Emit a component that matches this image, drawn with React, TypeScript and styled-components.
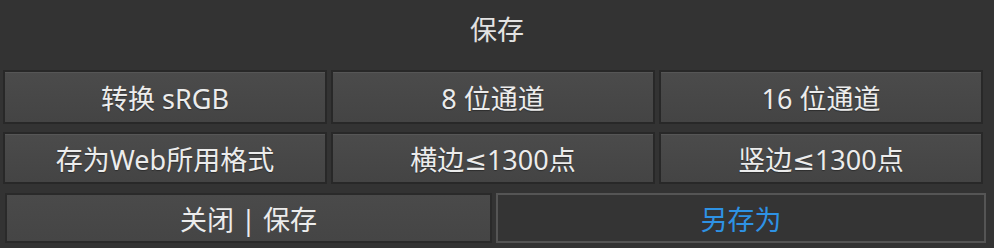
import React from "react";
import styled, { createGlobalStyle } from "styled-components";

const Global = createGlobalStyle`
  html, body { margin: 0; padding: 0; background: #333333; }
  body { font-family: "Noto Sans", "DejaVu Sans", "Noto Sans CJK SC", sans-serif; }
`;

const Panel = styled.div`
  width: 994px;
  height: 248px;
  background: #333333;
  display: flex;
  flex-direction: column;
  box-sizing: border-box;
  overflow: hidden;
`;

const Title = styled.div`
  height: 56px;
  display: flex;
  align-items: center;
  justify-content: center;
  color: #e2e2e2;
  font-size: 27px;
  font-family: "Noto Sans CJK SC", sans-serif;
  margin-bottom: 14px;
`;

const Grid = styled.div`
  display: grid;
  grid-template-columns: repeat(3, 1fr);
  column-gap: 4px;
  row-gap: 8px;
  padding: 0 11px 0 3px;
`;

const Btn = styled.div<{ $h: number }>`
  height: ${(p) => p.$h}px;
  box-sizing: border-box;
  border: 2px solid #282828;
  background: linear-gradient(#4b4b4b, #444444);
  box-shadow: inset 0 1px 0 #565656;
  color: #ececec;
  font-size: 27px;
  display: flex;
  align-items: center;
  justify-content: center;
  text-shadow: 0 1px 1px rgba(0, 0, 0, 0.35);
  white-space: nowrap;
`;

const Bottom = styled.div`
  display: grid;
  grid-template-columns: 487px 1fr;
  column-gap: 4px;
  padding: 9px 8px 0 5px;
`;

const BottomBtn = styled.div<{ $primary?: boolean }>`
  height: 50px;
  box-sizing: border-box;
  display: flex;
  align-items: center;
  justify-content: center;
  font-size: 27px;
  white-space: nowrap;
  border: 2px solid ${(p) => (p.$primary ? "#555555" : "#2a2a2a")};
  background: ${(p) =>
    p.$primary ? "#343434" : "linear-gradient(#4a4a4a, #454545)"};
  color: ${(p) => (p.$primary ? "#2e92e4" : "#ececec")};
`;

const rows = [
  ["转换 sRGB", "8 位通道", "16 位通道"],
  ["存为Web所用格式", "横边≤1300点", "竖边≤1300点"],
];

export default function App() {
  return (
    <>
      <Global />
      <Panel>
        <Title>保存</Title>
        <Grid>
          {rows[0].map((t) => (
            <Btn key={t} $h={54}>
              {t}
            </Btn>
          ))}
          {rows[1].map((t) => (
            <Btn key={t} $h={52}>
              {t}
            </Btn>
          ))}
        </Grid>
        <Bottom>
          <BottomBtn>关闭 | 保存</BottomBtn>
          <BottomBtn $primary>另存为</BottomBtn>
        </Bottom>
      </Panel>
    </>
  );
}
